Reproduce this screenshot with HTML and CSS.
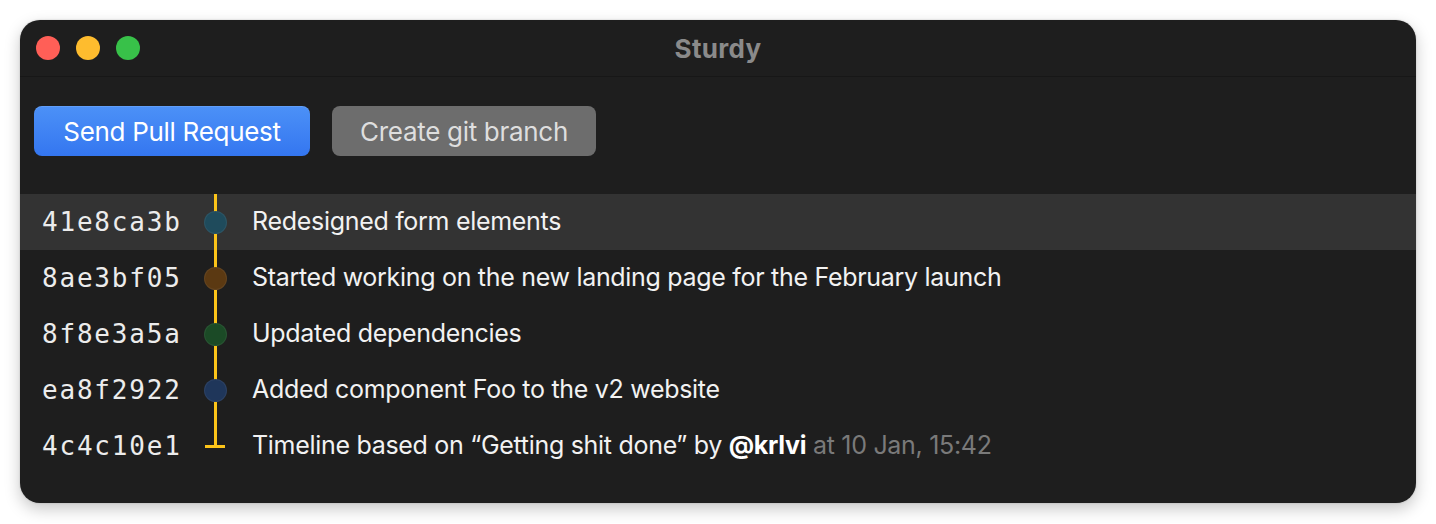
FILE: index.html
```html
<!DOCTYPE html>
<html>
<head>
<meta charset="utf-8">
<link rel="stylesheet" href="styles.css">
</head>
<body>
<div class="window">
  <div class="titlebar">
    <div class="lights">
      <span class="light red"></span>
      <span class="light yellow"></span>
      <span class="light green"></span>
    </div>
    <div class="title">Sturdy</div>
  </div>
  <div class="actions">
    <button class="btn primary">Send Pull Request</button>
    <button class="btn secondary">Create git branch</button>
  </div>
  <div class="timeline">
    <div class="row active">
      <span class="hash">41e8ca3b</span>
      <span class="graph"><span class="dot teal"></span></span>
      <span class="msg">Redesigned form elements</span>
    </div>
    <div class="row">
      <span class="hash">8ae3bf05</span>
      <span class="graph"><span class="dot brown"></span></span>
      <span class="msg">Started working on the new landing page for the February launch</span>
    </div>
    <div class="row">
      <span class="hash">8f8e3a5a</span>
      <span class="graph"><span class="dot green"></span></span>
      <span class="msg">Updated dependencies</span>
    </div>
    <div class="row">
      <span class="hash">ea8f2922</span>
      <span class="graph"><span class="dot navy"></span></span>
      <span class="msg">Added component Foo to the v2 website</span>
    </div>
    <div class="row">
      <span class="hash">4c4c10e1</span>
      <span class="graph end"></span>
      <span class="msg">Timeline based on “Getting shit done” by <b>@krlvi</b> <span class="meta">at 10 Jan, 15:42</span></span>
    </div>
  </div>
</div>
</body>
</html>
```
FILE: styles.css
```css
html, body {
  margin: 0;
  padding: 0;
  background: #ffffff;
}
body {
  padding: 20px;
  font-family: Inter, "Noto Sans", sans-serif;
}
.window {
  width: 1396px;
  height: 483px;
  background: #1e1e1e;
  border-radius: 20px;
  box-shadow: 0 6px 16px rgba(0,0,0,0.22), 0 0 2px rgba(0,0,0,0.2);
  overflow: hidden;
  display: flex;
  flex-direction: column;
}
.titlebar {
  height: 56px;
  border-bottom: 1px solid #171717;
  display: flex;
  align-items: center;
  position: relative;
}
.lights {
  display: flex;
  gap: 16px;
  padding-left: 16px;
}
.light {
  width: 24px;
  height: 24px;
  border-radius: 50%;
  display: block;
}
.red { background: #ff5f57; }
.yellow { background: #febc2e; }
.green { background: #38c149; }
.title {
  position: absolute;
  left: 0;
  right: 0;
  text-align: center;
  color: #8a8a8a;
  font-weight: 700;
  font-size: 26px;
  letter-spacing: 0.3px;
}
.actions {
  display: flex;
  gap: 22px;
  padding: 29px 0 0 14px;
}
.btn {
  height: 50px;
  border-radius: 8px;
  border: none;
  font-family: Inter, "Noto Sans", sans-serif;
  font-size: 26px;
  padding: 0;
  letter-spacing: -0.3px;
}
.primary {
  width: 276px;
  color: #ffffff;
  background: linear-gradient(#4c91f7, #3476f0);
  box-shadow: inset 0 1px 0 rgba(255,255,255,0.12);
}
.secondary {
  width: 264px;
  color: #dedede;
  background: #6d6d6d;
}
.timeline {
  margin-top: 38px;
  display: flex;
  flex-direction: column;
}
.row {
  height: 56px;
  display: flex;
  align-items: center;
  padding-left: 22px;
}
.row.active {
  background: #333333;
}
.hash {
  width: 153px;
  font-family: "DejaVu Sans Mono", "Liberation Mono", monospace;
  font-size: 26px;
  letter-spacing: 1.8px;
  color: #ececec;
}
.graph {
  width: 40px;
  height: 56px;
  position: relative;
  display: flex;
  align-items: center;
  justify-content: center;
}
.graph::before {
  content: "";
  position: absolute;
  left: 18.5px;
  top: 0;
  bottom: 0;
  width: 3.5px;
  background: #fcc419;
}
.graph.end::before {
  bottom: 27px;
}
.graph.end::after {
  content: "";
  position: absolute;
  left: 10px;
  width: 20px;
  top: 27px;
  height: 3px;
  background: #fcc419;
}
.dot {
  width: 21px;
  height: 21px;
  border-radius: 50%;
  position: relative;
  border: 1px solid rgba(255,255,255,0.06);
}
.teal { background: #1f4b5c; }
.brown { background: #5b3912; }
.dot.green { background: #1b4a26; }
.navy { background: #1f365a; }
.msg {
  margin-left: 17px;
  color: #f2f2f2;
  font-size: 25px;
  letter-spacing: -0.3px;
  white-space: nowrap;
  margin-top: -2px;
}
.msg b {
  font-weight: 700;
  color: #ffffff;
}
.meta {
  color: #7a7a7a;
}
```
